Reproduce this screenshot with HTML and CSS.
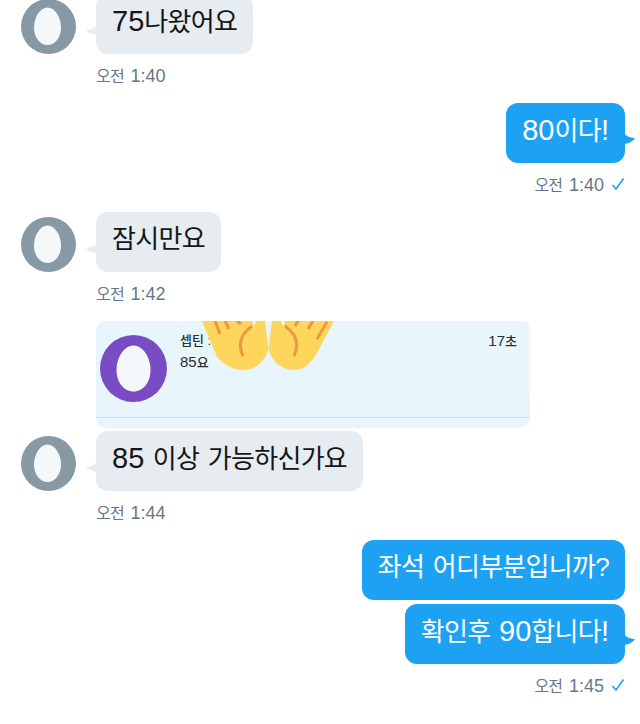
FILE: index.html
```html
<!DOCTYPE html>
<html>
<head>
  <title>Messages</title>
  <link rel="stylesheet" href="styles.css">
</head>
<body>
  <div id="thread">
    <div class="row first">
      <svg class="avatar" viewBox="0 0 55 55"><circle cx="27.5" cy="27.5" r="27.5" fill="#8899a6"/><path d="M26.5 8.5c7.5 0 13.500 10 13.500 20 0 10-6 17.500-13.500 17.500S13 38.500 13 28.500c0-10 6-20 13.500-20z" fill="#f5f8fa"/></svg>
      <div class="bubble in"><span class="num">75</span>나왔어요</div>
    </div>
    <div class="meta in"><span class="time">오전 <span class="num">1:40</span></span></div>

    <div class="right">
      <div class="bubble out tail"><span class="num">80</span>이다<span class="num">!</span></div>
    </div>
    <div class="meta out"><span class="time">오전 <span class="num">1:40</span></span><svg class="check" viewBox="0 0 14 14"><path d="M1.5 8l3.500 4L12.500 1.500" fill="none" stroke="#1da1f2" stroke-width="1.6"/></svg></div>

    <div class="row">
      <svg class="avatar" viewBox="0 0 55 55"><circle cx="27.5" cy="27.5" r="27.5" fill="#8899a6"/><path d="M26.5 8.5c7.5 0 13.500 10 13.500 20 0 10-6 17.500-13.500 17.500S13 38.500 13 28.500c0-10 6-20 13.500-20z" fill="#f5f8fa"/></svg>
      <div class="bubble in">잠시만요</div>
    </div>
    <div class="meta in"><span class="time">오전 <span class="num">1:42</span></span></div>

    <div class="card">
      <svg class="card-avatar" viewBox="0 0 67 67"><circle cx="33.5" cy="33.5" r="33.5" fill="#794bc4"/><path d="M33.5 10.500c9.500 0 17 12 17 24.500 0 12.500-7.500 21.500-17 21.500S16.500 47.500 16.500 35c0-12.500 7.500-24.500 17-24.500z" fill="#f5f8fa"/></svg>
      <div class="card-text">
        <div class="card-top"><b>셉틴 :</b><span>17<b>초</b></span></div>
        <div class="card-msg">85<b>요</b></div>
      </div>
      <svg class="hands" viewBox="0 0 133 49">
        <path d="M0 0H50L52 6 54 0H63L66.500 28 70 0H79L81 6 83 0H132L115 32C109 43 101 49 92 49 80 49 70 41 66.500 28 63 41 53 49 41 49 31 49 21 43 15 36Z" fill="#ffd65c"/>
        <path d="M13 0l5 13M23 0l4 8M35 0l4 3M125 1l-10 17M111 0l-5 8M96 0l-3 5M50 5C40 12 35 22 41 35M83 5C93 12 98 22 92 35" fill="none" stroke="#ee9547" stroke-width="3"/>
      </svg>
    </div>

    <div class="row after-card">
      <svg class="avatar" viewBox="0 0 55 55"><circle cx="27.5" cy="27.5" r="27.5" fill="#8899a6"/><path d="M26.5 8.5c7.500 0 13.500 10 13.500 20 0 10-6 17.500-13.500 17.500S13 38.500 13 28.500c0-10 6-20 13.500-20z" fill="#f5f8fa"/></svg>
      <div class="bubble in"><span class="num">85</span> 이상 가능하신가요</div>
    </div>
    <div class="meta in"><span class="time">오전 <span class="num">1:44</span></span></div>

    <div class="right">
      <div class="bubble out">좌석 어디부분입니까?</div>
    </div>
    <div class="right second">
      <div class="bubble out tail">확인후 <span class="num">90</span>합니다<span class="num">!</span></div>
    </div>
    <div class="meta out"><span class="time">오전 <span class="num">1:45</span></span><svg class="check" viewBox="0 0 14 14"><path d="M1.500 8l3.500 4L12.500 1.500" fill="none" stroke="#1da1f2" stroke-width="1.6"/></svg></div>
  </div>
</body>
</html>
```

FILE: styles.css
```css
html, body {
  margin: 0;
  height: 724px;
  overflow: hidden;
  background-color: #fff;
}

body {
  font-family: "Liberation Sans", "Noto Sans CJK KR", sans-serif;
}

#thread {
  margin-top: -6px;
  padding: 0 15px 0 21px;
}

.row {
  display: flex;
  align-items: flex-end;
  gap: 20px;
}

.right {
  display: flex;
  justify-content: flex-end;
}

.right.second {
  margin-top: 4px;
}

.avatar {
  width: 55px;
  height: 55px;
  flex: none;
}

.bubble {
  position: relative;
  height: 60px;
  box-sizing: border-box;
  padding: 0 16px;
  border-radius: 12px;
  font-size: 26px;
  letter-spacing: -0.7px;
  word-spacing: 2px;
  line-height: 54px;
  white-space: nowrap;
}

.bubble .num {
  font-size: 29px;
  letter-spacing: 0;
}

.bubble.in {
  background-color: #e6ecf0;
  color: #14171a;
}

.bubble.out {
  background-color: #1da1f2;
  color: #fff;
}

.bubble.in::before {
  content: "";
  position: absolute;
  left: -10px;
  top: 26px;
  width: 14px;
  height: 18px;
  background-color: #e6ecf0;
  clip-path: path("M14 0 C12 6 6 10 0 10 C3 14 9 15 14 15 Z");
}

.bubble.out.tail::after {
  content: "";
  position: absolute;
  right: -10px;
  top: 25px;
  width: 14px;
  height: 18px;
  background-color: #1da1f2;
  clip-path: path("M0 0 C2 6 7 10 14 10 C11 15 5 16 0 16 Z");
}

.meta {
  display: flex;
  align-items: center;
  height: 49px;
  padding-bottom: 7px;
  box-sizing: border-box;
  font-size: 16px;
  letter-spacing: -0.8px;
  word-spacing: 3px;
  color: #657786;
}

.meta .num {
  font-size: 18px;
  letter-spacing: 0;
}

.meta.in {
  padding-left: 75px;
}

.meta.out {
  justify-content: flex-end;
  gap: 7px;
}

.check {
  width: 14px;
  height: 14px;
}

.card {
  position: relative;
  display: flex;
  box-sizing: border-box;
  height: 107px;
  width: 434px;
  margin-left: 75px;
  padding: 14px 13px 0 4px;
  border-radius: 10px;
  background-color: #e8f5fd;
}

.card::before {
  content: "";
  position: absolute;
  right: 0;
  top: 0;
  width: 3px;
  height: 76px;
  border-left: 1px solid #e4f1fb;
  border-radius: 0 10px 0 4px;
  background-color: #eff8fe;
}

.card::after {
  content: "";
  position: absolute;
  left: 0;
  right: 0;
  bottom: 10px;
  border-bottom: 1px solid #d5dfe6;
}

.card-avatar {
  width: 67px;
  height: 67px;
  flex: none;
}

.card-text {
  flex: 1;
  margin: -4px 0 0 13px;
  font-size: 15px;
  color: #292f33;
}

.card-text b {
  font-size: 13px;
  font-weight: 500;
}

.card-top {
  display: flex;
  justify-content: space-between;
  line-height: 20px;
}

.card-msg {
  line-height: 20px;
}

.hands {
  position: absolute;
  left: 106px;
  top: 0;
  width: 133px;
  height: 49px;
}

.row.after-card {
  margin-top: 3px;
}
```
